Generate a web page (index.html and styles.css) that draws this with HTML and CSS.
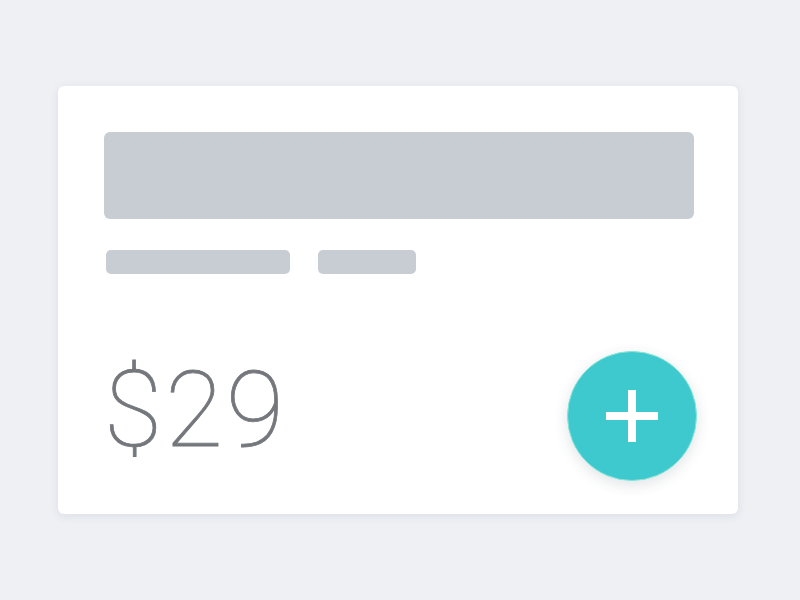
FILE: index.html
```html
<!DOCTYPE html>
<html>
<head>
<meta charset="utf-8">
<link rel="stylesheet" href="styles.css">
</head>
<body>
<div class="card">
  <div class="banner"></div>
  <div class="meta">
    <div class="pill pill-long"></div>
    <div class="pill pill-short"></div>
  </div>
  <div class="footer">
    <div class="price">$29</div>
    <button class="fab" aria-label="Add">
      <svg width="52" height="52" viewBox="0 0 52 52"><rect x="0" y="22" width="52" height="8" fill="#fff"/><rect x="22" y="0" width="8" height="52" fill="#fff"/></svg>
    </button>
  </div>
</div>
</body>
</html>
```
FILE: styles.css
```css
html, body { margin: 0; padding: 0; }
body {
  background: #eef0f4;
  width: 800px;
  height: 600px;
  font-family: "Roboto", "Liberation Sans", sans-serif;
  overflow: hidden;
}
.card {
  box-sizing: border-box;
  margin: 86px 0 0 58px;
  width: 680px;
  height: 428px;
  background: #fff;
  border-radius: 6px;
  box-shadow: 0 2px 10px rgba(60, 70, 90, 0.10);
  padding: 46px 41px 33px 46px;
  display: flex;
  flex-direction: column;
}
.banner {
  width: 590px;
  height: 87px;
  background: #c8cdd3;
  border-radius: 6px;
}
.meta {
  display: flex;
  gap: 28px;
  margin: 31px 0 0 2px;
}
.pill {
  height: 24px;
  background: #c8cdd3;
  border-radius: 5px;
}
.pill-long { width: 184px; }
.pill-short { width: 98px; }
.footer {
  margin-top: auto;
  display: flex;
  justify-content: space-between;
  align-items: center;
}
.price {
  font-family: "Roboto", sans-serif;
  font-weight: 100;
  font-size: 106px;
  color: #74777c;
  line-height: 1;
  margin: 0 0 12px 0;
  letter-spacing: 3px;
  -webkit-text-stroke: 0.8px #74777c;
}
.fab {
  width: 130px;
  height: 130px;
  border-radius: 50%;
  border: 1px solid #86e6da;
  background: #3dc9ce;
  box-shadow: 0 4px 14px rgba(40, 60, 70, 0.14);
  display: flex;
  align-items: center;
  justify-content: center;
  padding: 0;
  cursor: pointer;
}
.fab svg { display: block; }
```
